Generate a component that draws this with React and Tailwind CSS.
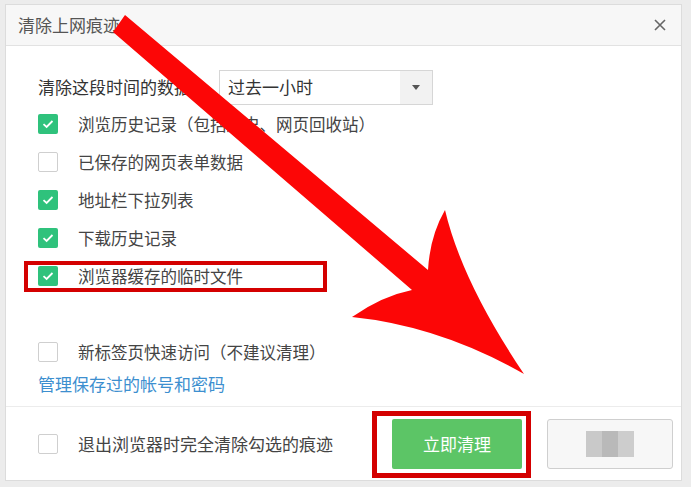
import React from "react";

const rows = [
  { label: "浏览历史记录（包括历史、网页回收站）", checked: true },
  { label: "已保存的网页表单数据", checked: false },
  { label: "地址栏下拉列表", checked: true },
  { label: "下载历史记录", checked: true },
  { label: "浏览器缓存的临时文件", checked: true },
];

function Box({ checked }) {
  if (checked) {
    return (
      <span className="w-[20px] h-[20px] rounded-[2px] bg-[#2fc27c] flex items-center justify-center shrink-0">
        <svg width="12" height="10" viewBox="0 0 12 10">
          <path d="M1.5 5.2 L4.6 8 L10.5 2" fill="none" stroke="#fff" strokeWidth="1.8" />
        </svg>
      </span>
    );
  }
  return <span className="w-[20px] h-[20px] rounded-[2px] border border-[#cfcfcf] bg-white shrink-0" />;
}

function Row({ label, checked }) {
  return (
    <div className="h-[38px] flex items-center">
      <Box checked={checked} />
      <span className="ml-[20px] text-[16.5px] text-[#444]">{label}</span>
    </div>
  );
}

export default function App() {
  return (
    <div
      className="w-[691px] h-[487px] bg-[#ececec] relative overflow-hidden pt-[4px] pl-[5px]"
      style={{ fontFamily: '"Noto Sans CJK SC", "Noto Sans", sans-serif' }}
    >
      <div className="w-[677px] h-[477px] bg-white border border-[#dcdcdc] flex flex-col">
        {/* title bar */}
        <div className="h-[41px] bg-[#f7f7f7] border-b border-[#e2e2e2] flex items-center justify-between pl-[12px] pr-[10px]">
          <span className="text-[17px] text-[#555]">清除上网痕迹</span>
          <svg width="14" height="14" viewBox="0 0 14 14" className="mr-[4px]">
            <path d="M2 2 L12 12 M12 2 L2 12" stroke="#666" strokeWidth="1.6" />
          </svg>
        </div>

        {/* body */}
        <div className="flex-1 pl-[32px] pt-[23px]">
          <div className="h-[36px] flex items-center">
            <span className="text-[17px] text-[#333] w-[181px] whitespace-nowrap">清除这段时间的数据:</span>
            <div className="w-[214px] h-[35px] border border-[#d6d6d6] flex">
              <span className="flex-1 pl-[8px] flex items-center text-[17px] text-[#333]">过去一小时</span>
              <span className="w-[32px] bg-[#f2f2f2] flex items-center justify-center">
                <svg width="8" height="5" viewBox="0 0 8 5">
                  <path d="M0 0 L8 0 L4 5 Z" fill="#555" />
                </svg>
              </span>
            </div>
          </div>
          {rows.map((r, idx) => (
            <Row key={idx} label={r.label} checked={r.checked} />
          ))}
          <div className="h-[38px]" />
          <Row label="新标签页快速访问（不建议清理）" checked={false} />
          <div className="h-[26px] flex items-center text-[17px] text-[#3d8fcf]">管理保存过的帐号和密码</div>
        </div>

        {/* footer */}
        <div className="h-[74px] border-t border-[#ececec] flex items-center pl-[32px] pr-[8px]">
          <Box checked={false} />
          <span className="ml-[20px] text-[17px] text-[#444]">退出浏览器时完全清除勾选的痕迹</span>
          <div className="ml-auto flex items-center gap-[25px]">
            <button className="w-[130px] h-[50px] bg-[#5cc566] text-white text-[17px] rounded-[2px]">立即清理</button>
            <button className="w-[126px] h-[50px] bg-[#f7f7f7] border border-[#cfcfcf] rounded-[3px] flex items-center justify-center">
              <span className="flex">
                <span className="w-[16px] h-[26px] bg-[#c9c9c9]" />
                <span className="w-[16px] h-[26px] bg-[#b9b9b9]" />
                <span className="w-[16px] h-[26px] bg-[#cdcdcd]" />
              </span>
            </button>
          </div>
        </div>
      </div>

      {/* annotation boxes */}
      <div className="absolute left-[24px] top-[261px] w-[303px] h-[31px] border-[4px] border-[#d40000]" />
      <div className="absolute left-[372px] top-[411px] w-[159px] h-[67px] border-[5px] border-[#d40000]" />

      {/* annotation arrow */}
      <svg className="absolute left-0 top-0" width="691" height="487" viewBox="0 0 691 487">
        <path
          d="M125 15 L428 270 Q430 236 445 210 Q462 282 524 374 Q440 326 352 317 Q382 296 412 290 L113 32 Z"
          fill="#fc0606"
        />
      </svg>
    </div>
  );
}
